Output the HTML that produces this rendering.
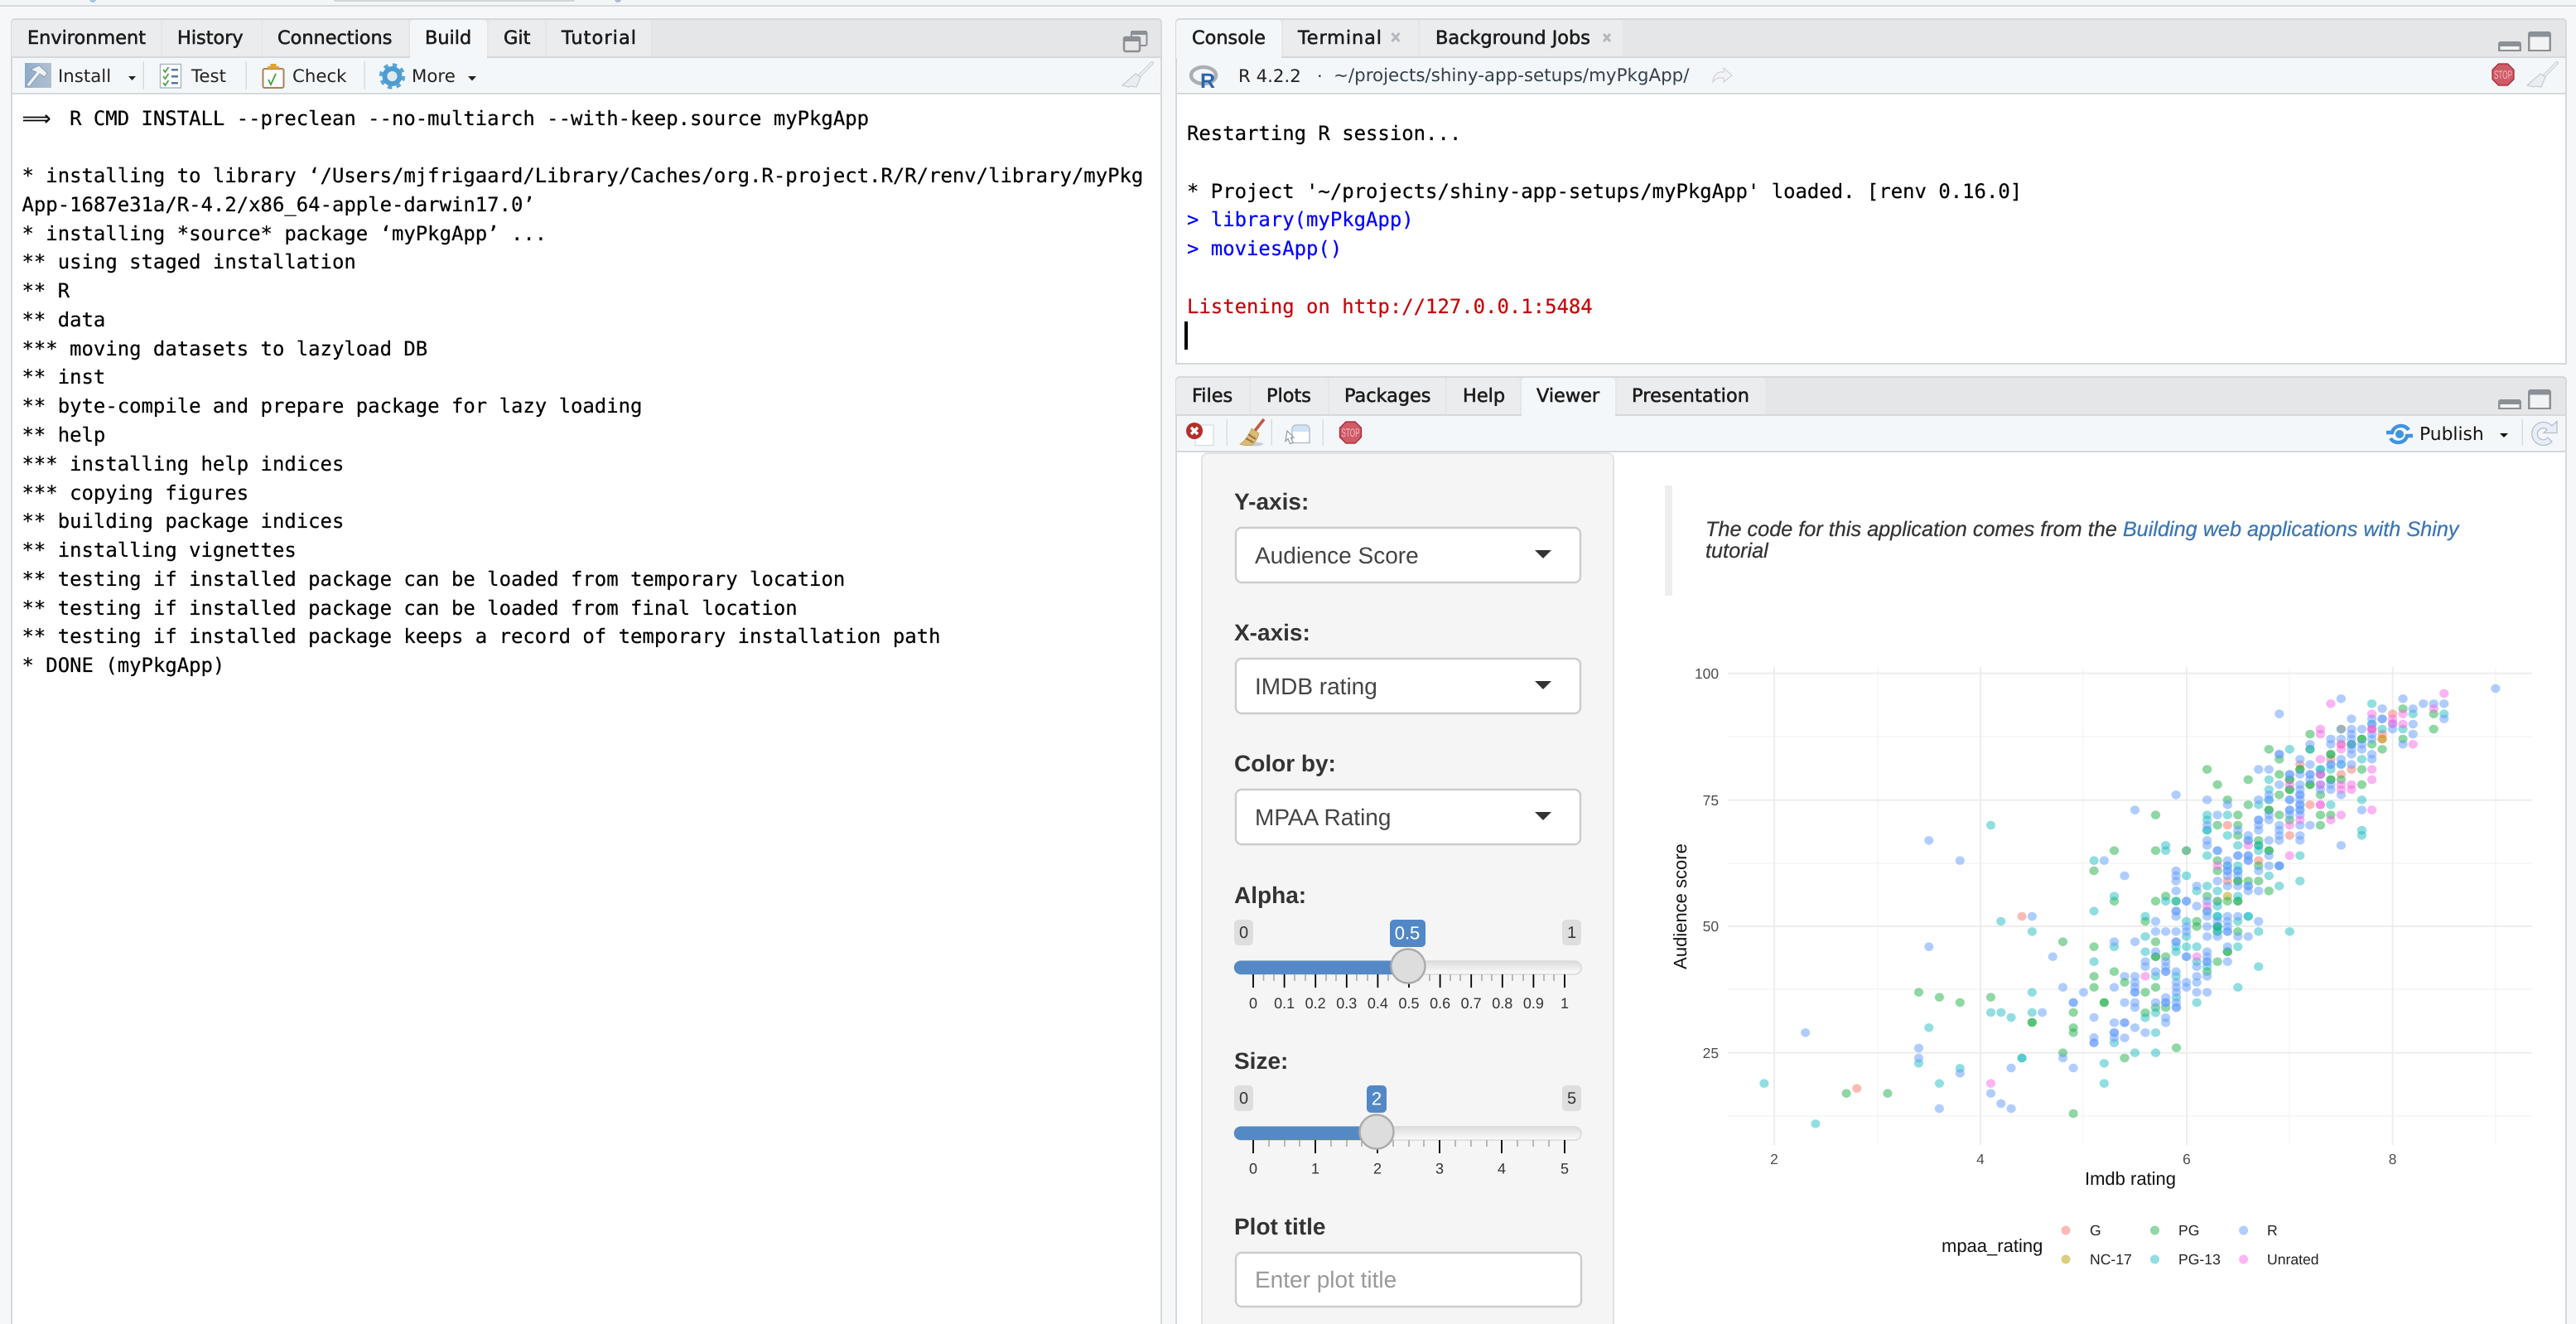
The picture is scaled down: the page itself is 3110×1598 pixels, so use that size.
<!DOCTYPE html>
<html lang="en">
<head>
<meta charset="utf-8">
<title>RStudio</title>
<style>
html,body{margin:0;padding:0;width:3110px;height:1598px;overflow:hidden;background:#f5f7f9}
svg{position:absolute;left:0;top:0;text-rendering:geometricPrecision}
pre{position:absolute;margin:0;font-family:"DejaVu Sans Mono","Liberation Mono",monospace;font-size:23.93px;line-height:34.77px;color:#000;text-rendering:geometricPrecision;white-space:pre;-webkit-text-stroke:.22px}
.u{font-family:"DejaVu Sans","Liberation Sans",sans-serif}
.tb{font-size:22.4px;fill:#1c1c1c;stroke:#1c1c1c;stroke-width:.6px}
.tl{font-size:21.3px;fill:#222}
.h{font-family:"Liberation Sans",Arial,sans-serif}
.lb{font-size:28px;font-weight:700;fill:#333}
.sl{font-size:28px;fill:#444}
.tk{font-size:18px;fill:#333;text-anchor:middle}
.bd{font-size:20px;fill:#333;text-anchor:middle}
.bb{font-size:22px;fill:#fff;text-anchor:middle}
.yt{font-size:17.4px;fill:#4d4d4d;text-anchor:end}
.xt{font-size:17.4px;fill:#4d4d4d;text-anchor:middle}
.at{font-size:22px;fill:#111}
.lg{font-size:17.6px;fill:#222}
.d circle{r:15.8px}
.G{fill:#F8766D;fill-opacity:.5}
.N{fill:#B79F00;fill-opacity:.5}
.P{fill:#1fb04a;fill-opacity:.5}
.T{fill:#0fb8bd;fill-opacity:.46}
.R{fill:#619CFF;fill-opacity:.5}
.U{fill:#F564E3;fill-opacity:.48}
</style>
</head>
<body>
<svg width="3110" height="1598" viewBox="0 0 3110 1598" xmlns="http://www.w3.org/2000/svg">
<defs>
<linearGradient id="hm" x1="0" y1="0" x2="1" y2="0"><stop offset="0" stop-color="#8ea9c8"/><stop offset="1" stop-color="#b4c4d6"/></linearGradient>
<linearGradient id="trk" x1="0" y1="0" x2="0" y2="1"><stop offset="0" stop-color="#dcdcdc"/><stop offset="1" stop-color="#fcfcfc"/></linearGradient>
<g id="broomL">
<path d="M3087 76l-15 15" stroke="#c8ced4" stroke-width="4" stroke-linecap="round"/>
<path d="M3087 76l-15 15" stroke="#f3f5f7" stroke-width="1.6" stroke-linecap="round"/>
<path d="M3067 89l6 4-5 12-7-1-2 1-8-2z" fill="#eaeef2" stroke="#c5ccd3" stroke-width="1.2"/>
</g>
<g id="mm">
<path d="M3016 62v-9a3 3 0 0 1 3-3h22a3 3 0 0 1 3 3v9z" fill="#8a9094"/><rect x="3018.5" y="56" width="23" height="4" fill="#f2f4f6"/>
<path d="M3052 62V41a3 3 0 0 1 3-3h22a3 3 0 0 1 3 3v21z" fill="#8a9094"/><rect x="3054.5" y="44.5" width="23" height="15.5" fill="#f1f3f5"/>
</g>
<g id="stop">
<polygon points="-5.6,-13 5.6,-13 13,-5.6 13,5.6 5.6,13 -5.6,13 -13,5.6 -13,-5.6" fill="#cf5b67" stroke="#a3232c" stroke-width="1.2"/>
<text class="h" x="-11" y="5" textLength="22" lengthAdjust="spacingAndGlyphs" font-size="14" fill="#f3b9bd">STOP</text>
</g>
</defs>

<!-- top bar -->
<rect x="0" y="0" width="3110" height="6" fill="#f3f6f7"/>
<rect x="0" y="6" width="3110" height="2" fill="#d6dadc"/>
<path d="M403 0h291v0a2 2 0 0 1-2 2H405a2 2 0 0 1-2-2z" fill="#d2d6da"/>
<circle cx="112" cy="-1" r="4" fill="#9cc5e8"/><circle cx="746" cy="-1" r="4" fill="#a9bcd3"/>

<!-- LEFT PANE -->
<path d="M13 1598V27a5 5 0 0 1 5-5H1398a5 5 0 0 1 5 5V1598z" fill="#d5d9dc"/>
<rect x="15" y="114" width="1386" height="1484" fill="#fff"/>
<path d="M15 68V28a4 4 0 0 1 4-4H1397a4 4 0 0 1 4 4V68z" fill="#e5e6e8"/>
<rect x="15" y="68" width="1386" height="2" fill="#d5d9dc"/>
<rect x="15" y="70" width="1386" height="42" fill="#f4f7f9"/>
<rect x="15" y="112" width="1386" height="2" fill="#d5d9dc"/>
<g fill="#ebecee">
<path d="M14 68V28a4 4 0 0 1 4-4H190a4 4 0 0 1 4 4V68z"/>
<path d="M196 68V28a4 4 0 0 1 4-4H311a4 4 0 0 1 4 4V68z"/>
<path d="M317 68V28a4 4 0 0 1 4-4H489a4 4 0 0 1 4 4V68z"/>
<path d="M590 68V28a4 4 0 0 1 4-4H654a4 4 0 0 1 4 4V68z"/>
<path d="M660 68V28a4 4 0 0 1 4-4H782a4 4 0 0 1 4 4V68z"/>
</g>
<path d="M495 70V28a4 4 0 0 1 4-4H584a4 4 0 0 1 4 4V70z" fill="#f4f7f9"/>
<g class="u tb">
<text x="33" y="53">Environment</text>
<text x="214" y="53">History</text>
<text x="335" y="53">Connections</text>
<text x="513" y="53">Build</text>
<text x="608" y="53">Git</text>
<text x="678" y="53" textLength="90">Tutorial</text>
</g>
<!-- left toolbar -->
<rect x="30" y="76" width="32" height="30" fill="url(#hm)"/>
<path d="M30 106l32-30v30z" fill="#a8b9cc" opacity=".5"/>
<path d="M37 84l10-5 10 9-3 5-6-4-13 16-3-3 12-15z" fill="#eef2f6" stroke="#7f95ad" stroke-width=".8"/>
<path d="M155 92h9l-4.500 5z" fill="#222"/>
<rect x="172.500" y="74" width="1.500" height="34" fill="#d9dde0"/>
<rect x="193.500" y="77.500" width="25" height="28.500" fill="#fff" stroke="#a9b4c0" stroke-width="1.400"/>
<g fill="none" stroke="#4ca34a" stroke-width="1.800"><path d="M197 84l2.500 3 4-6"/><path d="M197 92l2.500 3 4-6"/><path d="M197 100l2.500 3 4-6"/></g>
<g fill="#5577a8"><rect x="207" y="83" width="8" height="2.500"/><rect x="207" y="91" width="8" height="2.500"/><rect x="207" y="99" width="8" height="2.500"/></g>
<text class="u tl" x="231" y="99">Test</text>
<rect x="296.500" y="74" width="1.500" height="34" fill="#d9dde0"/>
<rect x="317.500" y="83" width="25" height="23" rx="2" fill="#fff" stroke="#a98258" stroke-width="2"/>
<path d="M323 83v-3h3.500v-3h7v3h3.500v3z" fill="#e0a52e"/>
<path d="M324 96l3 6 6-13" fill="none" stroke="#3aa33a" stroke-width="1.800"/>
<text class="u tl" x="353" y="99">Check</text>
<rect x="439.500" y="74" width="1.500" height="34" fill="#d9dde0"/>
<circle cx="473.500" cy="92" r="13" fill="none" stroke="#5aa7d8" stroke-width="5.500" stroke-dasharray="5.100 5.110"/>
<circle cx="473.500" cy="92" r="9" fill="none" stroke="#4f9cd0" stroke-width="6"/>
<circle cx="473.500" cy="92" r="5.500" fill="#dfe9f0"/>
<text class="u tl" x="497" y="99">More</text>
<path d="M565 92h10l-5 5.500z" fill="#222"/>
<text class="u tl" x="70" y="99">Install</text>
<use href="#broomL" x="-1696" y="0"/>
<rect x="1366" y="38" width="18.500" height="17" rx="2" fill="#e5e6e8" stroke="#8a9094" stroke-width="2"/>
<rect x="1365" y="37" width="20" height="5" rx="2" fill="#8a9094"/>
<rect x="1357" y="45" width="19" height="17" rx="2" fill="#e5e6e8" stroke="#8a9094" stroke-width="2.500"/>
<rect x="1356" y="44" width="21" height="6" rx="2" fill="#8a9094"/>

<!-- CONSOLE PANE -->
<path d="M1419 440V27a5 5 0 0 1 5-5H3094a5 5 0 0 1 5 5V440z" fill="#d5d9dc"/>
<rect x="1421" y="114" width="1676" height="324" fill="#fff"/>
<path d="M1421 68V28a4 4 0 0 1 4-4H3093a4 4 0 0 1 4 4V68z" fill="#e5e6e8"/>
<rect x="1421" y="68" width="1676" height="2" fill="#d5d9dc"/>
<rect x="1421" y="70" width="1676" height="42" fill="#f4f7f9"/>
<rect x="1421" y="112" width="1676" height="2" fill="#d5d9dc"/>
<g fill="#ebecee">
<path d="M1549 68V28a4 4 0 0 1 4-4H1708a4 4 0 0 1 4 4V68z"/>
<path d="M1714 68V28a4 4 0 0 1 4-4H1955a4 4 0 0 1 4 4V68z"/>
</g>
<path d="M1420 70V28a4 4 0 0 1 4-4H1543a4 4 0 0 1 4 4V70z" fill="#f4f7f9"/>
<g class="u tb">
<text x="1439" y="53">Console</text>
<text x="1567" y="53" textLength="101">Terminal</text>
<text x="1733" y="53">Background Jobs</text>
</g>
<path d="M1680.500 40l9 10M1689.500 40l-9 10M1936 41l8 9M1944 41l-8 9" stroke="#b4b8bc" stroke-width="3" fill="none"/>
<ellipse cx="1453" cy="91" rx="15" ry="10" fill="none" stroke="#a9afb5" stroke-width="4.500"/>
<text class="h" x="1449" y="106" font-size="25" font-weight="700" fill="#2c63ae">R</text>
<text class="u" x="1495" y="99" font-size="21.300" fill="#222">R 4.2.2</text>
<text class="u" x="1590" y="99" font-size="21" fill="#333">·</text>
<text class="u" x="1610" y="98" font-size="21.400" fill="#33404e">~/projects/shiny-app-setups/myPkgApp/</text>
<path d="M2068 99c0-9 6-13 13-12v-5l10 9-10 8v-5c-6-1-10 1-13 5z" fill="#f1f3f5" stroke="#cfd4d9" stroke-width="1.200"/>
<use href="#stop" transform="translate(3022 90)"/>
<use href="#broomL"/>
<use href="#mm"/>

<!-- VIEWER PANE -->
<path d="M1419 1598V459a5 5 0 0 1 5-5H3094a5 5 0 0 1 5 5V1598z" fill="#d5d9dc"/>
<rect x="1421" y="546" width="1676" height="1052" fill="#fff"/>
<path d="M1421 500V460a4 4 0 0 1 4-4H3093a4 4 0 0 1 4 4V500z" fill="#e5e6e8"/>
<rect x="1421" y="500" width="1676" height="2" fill="#d5d9dc"/>
<rect x="1421" y="502" width="1676" height="42" fill="#f4f7f9"/>
<rect x="1421" y="544" width="1676" height="2" fill="#d5d9dc"/>
<g fill="#ebecee">
<path d="M1420 500V460a4 4 0 0 1 4-4H1504a4 4 0 0 1 4 4V500z"/>
<path d="M1510 500V460a4 4 0 0 1 4-4H1599a4 4 0 0 1 4 4V500z"/>
<path d="M1605 500V460a4 4 0 0 1 4-4H1741a4 4 0 0 1 4 4V500z"/>
<path d="M1747 500V460a4 4 0 0 1 4-4H1831a4 4 0 0 1 4 4V500z"/>
<path d="M1952 500V460a4 4 0 0 1 4-4H2127a4 4 0 0 1 4 4V500z"/>
</g>
<path d="M1837 502V460a4 4 0 0 1 4-4H1946a4 4 0 0 1 4 4V502z" fill="#f4f7f9"/>
<g class="u tb">
<text x="1439" y="485">Files</text>
<text x="1529" y="485">Plots</text>
<text x="1623" y="485">Packages</text>
<text x="1766" y="485">Help</text>
<text x="1855" y="485">Viewer</text>
<text x="1970" y="485" textLength="142">Presentation</text>
</g>
<use href="#mm" y="432"/>
<!-- viewer toolbar icons -->
<rect x="1443" y="513" width="22" height="24.500" fill="#fff" stroke="#d5dae0" stroke-width="1.200"/>
<circle cx="1442" cy="520" r="10" fill="#b4302b"/>
<path d="M1438 516l8 8M1446 516l-8 8" stroke="#fff" stroke-width="3.400"/>
<rect x="1480.500" y="506" width="1.500" height="32" fill="#d9dde0"/>
<ellipse cx="1514" cy="536" rx="11" ry="2.500" fill="#c9ced2"/>
<path d="M1526 506l-11 14" stroke="#bf5a40" stroke-width="3.600"/>
<path d="M1511 517l9 6c-1 6-5 11-8 14-5 1-10 1-15-1 6-4 11-11 14-19z" fill="#d9bb74" stroke="#b99a55" stroke-width=".7"/>
<path d="M1507 524l9 6M1504 529l9 5" stroke="#9c6f3c" stroke-width="2"/>
<rect x="1534.500" y="506" width="1.500" height="32" fill="#d9dde0"/>
<path d="M1560 534.500V518a5 5 0 0 1 5-5h11a5 5 0 0 1 5 5v16.500z" fill="#fff" stroke="#aab6c2" stroke-width="1.300"/>
<path d="M1560.700 521v-3a5 5 0 0 1 5-4.300h10a5 5 0 0 1 4.700 4.300v3z" fill="#cfe3f8"/>
<path d="M1560 517l8 8h-3.500l2.500 6-3.500 1.500-2.500-6-3 3z" transform="translate(-6 3)" fill="#fff" stroke="#8e9aa6" stroke-width="1.200"/>
<rect x="1596.500" y="506" width="1.500" height="32" fill="#d9dde0"/>
<use href="#stop" transform="translate(1630.500 522)"/>
<!-- publish -->
<circle cx="2897" cy="524" r="5" fill="#3e94e0"/>
<path d="M2881 522h7c2-9 15-11 20-3M2913 526h-7c-2 9-15 11-20 3" fill="none" stroke="#3e94e0" stroke-width="4.400"/>
<text class="u" x="2921" y="531" font-size="21.800" fill="#111">Publish</text>
<path d="M3018 523h10l-5 5z" fill="#111"/>
<rect x="3044.500" y="506" width="1.500" height="32" fill="#d9dde0"/>
<path d="M3081 514a14 14 0 1 0 0 19l-5-5a7 7 0 1 1-1-9.500l-4 4h16v-14z" fill="#e8eef7" stroke="#b6bec8" stroke-width="1.300"/>

<!-- well -->
<path d="M1451 1600V554a7 7 0 0 1 7-7h483a7 7 0 0 1 7 7V1600z" fill="#f5f5f5" stroke="#e3e3e3" stroke-width="2"/>
<g class="h">
<text class="lb" x="1490" y="615">Y-axis:</text>
<text class="lb" x="1490" y="773">X-axis:</text>
<text class="lb" x="1490" y="931">Color by:</text>
<text class="lb" x="1490" y="1090">Alpha:</text>
<text class="lb" x="1490" y="1290">Size:</text>
<text class="lb" x="1490" y="1490">Plot title</text>
</g>
<g fill="#fff" stroke="#cccccc" stroke-width="2.400">
<rect x="1492" y="637" width="416" height="66" rx="7"/>
<rect x="1492" y="795" width="416" height="66" rx="7"/>
<rect x="1492" y="953" width="416" height="66" rx="7"/>
<rect x="1492" y="1512" width="417" height="65" rx="7"/>
</g>
<g class="h">
<text class="sl" x="1515" y="680">Audience Score</text>
<text class="sl" x="1515" y="838">IMDB rating</text>
<text class="sl" x="1515" y="996">MPAA Rating</text>
<text x="1515" y="1554" font-size="28" fill="#999">Enter plot title</text>
</g>
<g fill="#333"><path d="M1853 664h20l-10 10z"/><path d="M1853 822h20l-10 10z"/><path d="M1853 980h20l-10 10z"/></g>

<!-- alpha slider -->
<rect x="1490" y="1110" width="23" height="31" rx="5" fill="#dedede"/>
<rect x="1886" y="1110" width="23" height="31" rx="5" fill="#dedede"/>
<rect x="1678" y="1110" width="43" height="33" rx="5" fill="#5288c6"/>
<g class="h">
<text class="bd" x="1501.500" y="1132">0</text><text class="bd" x="1897.500" y="1132">1</text>
<text class="bb" x="1699" y="1133.500">0.5</text>
</g>
<rect x="1491" y="1160" width="418" height="16" rx="8" fill="url(#trk)" stroke="#d9d9d9" stroke-width="1.600"/>
<path d="M1700 1159.500H1498a8 8 0 0 0 0 16.500H1700z" fill="#5589c6"/>
<path d="M1525.500 1176v8M1538 1176v8M1563 1176v8M1576 1176v8M1601 1176v8M1613 1176v8M1638 1176v8M1651 1176v8M1676 1176v8M1688 1176v8M1713 1176v8M1726 1176v8M1751 1176v8M1763 1176v8M1789 1176v8M1801 1176v8M1826 1176v8M1839 1176v8M1864 1176v8M1876 1176v8" stroke="#aaa" stroke-width="1.600"/>
<path d="M1513 1176v16M1550.600 1176v16M1588.200 1176v16M1625.800 1176v16M1663.400 1176v16M1701 1176v16M1738.600 1176v16M1776.200 1176v16M1813.800 1176v16M1851.400 1176v16M1889 1176v16" stroke="#000" stroke-width="1.800"/>
<circle cx="1700" cy="1166" r="20.500" fill="#dddddd" stroke="#ababab" stroke-width="2.400"/>
<g class="h">
<text class="tk" x="1513" y="1217">0</text><text class="tk" x="1550.600" y="1217">0.1</text><text class="tk" x="1588.200" y="1217">0.2</text><text class="tk" x="1625.800" y="1217">0.3</text><text class="tk" x="1663.400" y="1217">0.4</text><text class="tk" x="1701" y="1217">0.5</text><text class="tk" x="1738.600" y="1217">0.6</text><text class="tk" x="1776.200" y="1217">0.7</text><text class="tk" x="1813.800" y="1217">0.8</text><text class="tk" x="1851.400" y="1217">0.9</text><text class="tk" x="1889" y="1217">1</text>
</g>
<!-- size slider -->
<rect x="1490" y="1310" width="23" height="31" rx="5" fill="#dedede"/>
<rect x="1886" y="1310" width="23" height="31" rx="5" fill="#dedede"/>
<rect x="1650" y="1310" width="24" height="33" rx="5" fill="#5288c6"/>
<g class="h">
<text class="bd" x="1501.500" y="1332">0</text><text class="bd" x="1897.500" y="1332">5</text>
<text class="bb" x="1662" y="1333.500">2</text>
</g>
<rect x="1491" y="1360" width="418" height="16" rx="8" fill="url(#trk)" stroke="#d9d9d9" stroke-width="1.600"/>
<path d="M1662 1359.500H1498a8 8 0 0 0 0 16.500H1662z" fill="#5589c6"/>
<path d="M1532 1376v8M1551 1376v8M1569 1376v8M1607 1376v8M1626 1376v8M1644 1376v8M1682 1376v8M1701 1376v8M1719 1376v8M1757 1376v8M1776 1376v8M1795 1376v8M1832 1376v8M1851 1376v8M1870 1376v8" stroke="#aaa" stroke-width="1.600"/>
<path d="M1513 1376v16M1588 1376v16M1663 1376v16M1738 1376v16M1813 1376v16M1889 1376v16" stroke="#000" stroke-width="1.800"/>
<circle cx="1662" cy="1366" r="20.500" fill="#dddddd" stroke="#ababab" stroke-width="2.400"/>
<g class="h">
<text class="tk" x="1513" y="1416.500">0</text><text class="tk" x="1588" y="1416.500">1</text><text class="tk" x="1663" y="1416.500">2</text><text class="tk" x="1738" y="1416.500">3</text><text class="tk" x="1813" y="1416.500">4</text><text class="tk" x="1889" y="1416.500">5</text>
</g>

<!-- blockquote -->
<rect x="2010" y="586" width="9" height="133" fill="#eeeeee"/>
<g class="h" font-size="25.250" font-style="italic" fill="#333" style="stroke:currentColor;stroke-width:0">
<text x="2059" y="647" stroke="#333" stroke-width=".25">The code for this application comes from the <tspan fill="#3a76b4" stroke="#3a76b4">Building web applications with Shiny</tspan></text>
<text x="2059" y="673" stroke="#333" stroke-width=".25">tutorial</text>
</g>

<!-- plot grid -->
<g stroke="#f2f2f2" stroke-width="1.200">
<path d="M2086 889H3057M2086 1042H3057M2086 1194H3057M2086 1347H3057"/>
<path d="M2267 805V1382M2515 805V1382M2764 805V1382M3013 805V1382"/>
</g>
<g stroke="#ededed" stroke-width="2">
<path d="M2086 812.700H3057M2086 965.700H3057M2086 1118H3057M2086 1270.700H3057"/>
<path d="M2142 805V1382M2391 805V1382M2640 805V1382M2888.600 805V1382"/>
</g>
<g class="h">
<text class="yt" x="2075" y="819">100</text><text class="yt" x="2075" y="972">75</text><text class="yt" x="2075" y="1124">50</text><text class="yt" x="2075" y="1277">25</text>
<text class="xt" x="2142" y="1405">2</text><text class="xt" x="2391" y="1405">4</text><text class="xt" x="2640" y="1405">6</text><text class="xt" x="2888.600" y="1405">8</text>
<text class="at" x="2572" y="1430" text-anchor="middle">Imdb rating</text>
<text class="at" transform="translate(2036 1094) rotate(-90)" text-anchor="middle">Audience score</text>
<text class="at" x="2344" y="1511">mpaa_rating</text>
<text class="lg" x="2523" y="1491">G</text><text class="lg" x="2523" y="1526">NC-17</text>
<text class="lg" x="2630" y="1491">PG</text><text class="lg" x="2630" y="1526">PG-13</text>
<text class="lg" x="2737" y="1491">R</text><text class="lg" x="2737" y="1526">Unrated</text>
</g>
<circle class="G" cx="2494" cy="1485" r="5.500"/><circle class="N" cx="2494" cy="1520" r="5.500"/>
<circle class="P" cx="2601.500" cy="1485" r="5.500"/><circle class="T" cx="2601.500" cy="1520" r="5.500"/>
<circle class="R" cx="2708.600" cy="1485" r="5.500"/><circle class="U" cx="2708.600" cy="1520" r="5.500"/>

<!-- points: upper right -->
<g class="d" transform="translate(2550 760) scale(.35714 .33333)">
<g class="G"><circle cx="948" cy="305"/><circle cx="913" cy="396"/><circle cx="809" cy="506"/><circle cx="774" cy="524"/><circle cx="635" cy="488"/><circle cx="739" cy="469"/><circle cx="669" cy="634"/><circle cx="704" cy="524"/><circle cx="390" cy="708"/><circle cx="600" cy="745"/><circle cx="495" cy="836"/><circle cx="390" cy="910"/><circle cx="774" cy="415"/><circle cx="878" cy="360"/><circle cx="913" cy="378"/></g>
<g class="N"><circle cx="390" cy="965"/><circle cx="913" cy="396"/><circle cx="774" cy="360"/><circle cx="251" cy="800"/><circle cx="356" cy="983"/></g>
<g class="P"><circle cx="669" cy="378"/><circle cx="530" cy="433"/><circle cx="669" cy="433"/><circle cx="565" cy="469"/><circle cx="321" cy="506"/><circle cx="460" cy="543"/><circle cx="565" cy="524"/><circle cx="635" cy="506"/><circle cx="635" cy="506"/><circle cx="739" cy="451"/><circle cx="739" cy="451"/><circle cx="844" cy="396"/><circle cx="844" cy="396"/><circle cx="809" cy="415"/><circle cx="809" cy="415"/><circle cx="878" cy="415"/><circle cx="913" cy="433"/><circle cx="983" cy="286"/><circle cx="983" cy="396"/><circle cx="1087" cy="305"/><circle cx="1087" cy="360"/><circle cx="774" cy="543"/><circle cx="739" cy="543"/><circle cx="739" cy="543"/><circle cx="844" cy="506"/><circle cx="844" cy="561"/><circle cx="600" cy="543"/><circle cx="600" cy="543"/><circle cx="600" cy="579"/><circle cx="600" cy="579"/><circle cx="669" cy="561"/><circle cx="669" cy="561"/><circle cx="565" cy="598"/><circle cx="704" cy="598"/><circle cx="356" cy="561"/><circle cx="390" cy="616"/><circle cx="460" cy="634"/><circle cx="147" cy="671"/><circle cx="530" cy="653"/><circle cx="530" cy="653"/><circle cx="565" cy="671"/><circle cx="704" cy="671"/><circle cx="739" cy="671"/><circle cx="704" cy="708"/><circle cx="425" cy="671"/><circle cx="425" cy="708"/><circle cx="356" cy="708"/><circle cx="425" cy="745"/><circle cx="495" cy="763"/><circle cx="495" cy="781"/><circle cx="600" cy="689"/><circle cx="147" cy="800"/><circle cx="7" cy="800"/><circle cx="530" cy="800"/><circle cx="530" cy="800"/><circle cx="356" cy="836"/><circle cx="356" cy="873"/><circle cx="495" cy="855"/><circle cx="460" cy="910"/><circle cx="495" cy="910"/><circle cx="425" cy="910"/><circle cx="425" cy="910"/><circle cx="530" cy="946"/><circle cx="147" cy="983"/><circle cx="7" cy="983"/><circle cx="181" cy="965"/><circle cx="321" cy="965"/><circle cx="390" cy="983"/><circle cx="425" cy="983"/><circle cx="425" cy="983"/><circle cx="216" cy="983"/><circle cx="112" cy="1056"/><circle cx="286" cy="1056"/><circle cx="286" cy="1075"/><circle cx="356" cy="1075"/><circle cx="356" cy="1075"/><circle cx="356" cy="1093"/><circle cx="425" cy="1093"/><circle cx="147" cy="1130"/><circle cx="181" cy="1184"/><circle cx="147" cy="1184"/><circle cx="147" cy="1184"/><circle cx="390" cy="1166"/><circle cx="390" cy="1166"/><circle cx="356" cy="1202"/><circle cx="321" cy="1238"/><circle cx="7" cy="1238"/></g>
<g class="T"><circle cx="878" cy="268"/><circle cx="1017" cy="305"/><circle cx="1122" cy="305"/><circle cx="983" cy="360"/><circle cx="878" cy="342"/><circle cx="913" cy="360"/><circle cx="600" cy="433"/><circle cx="669" cy="433"/><circle cx="844" cy="469"/><circle cx="739" cy="506"/><circle cx="704" cy="506"/><circle cx="704" cy="506"/><circle cx="774" cy="488"/><circle cx="530" cy="543"/><circle cx="530" cy="579"/><circle cx="530" cy="616"/><circle cx="495" cy="634"/><circle cx="739" cy="634"/><circle cx="844" cy="616"/><circle cx="390" cy="671"/><circle cx="321" cy="671"/><circle cx="321" cy="689"/><circle cx="321" cy="726"/><circle cx="321" cy="726"/><circle cx="390" cy="745"/><circle cx="425" cy="781"/><circle cx="495" cy="781"/><circle cx="495" cy="800"/><circle cx="460" cy="763"/><circle cx="321" cy="818"/><circle cx="635" cy="818"/><circle cx="181" cy="781"/><circle cx="181" cy="800"/><circle cx="251" cy="800"/><circle cx="530" cy="891"/><circle cx="635" cy="910"/><circle cx="565" cy="928"/><circle cx="251" cy="891"/><circle cx="321" cy="928"/><circle cx="356" cy="946"/><circle cx="425" cy="855"/><circle cx="425" cy="873"/><circle cx="286" cy="946"/><circle cx="390" cy="855"/><circle cx="425" cy="965"/><circle cx="321" cy="1019"/><circle cx="356" cy="983"/><circle cx="356" cy="1001"/><circle cx="181" cy="983"/><circle cx="216" cy="983"/><circle cx="7" cy="965"/><circle cx="112" cy="1038"/><circle cx="251" cy="1056"/><circle cx="356" cy="1038"/><circle cx="356" cy="1038"/><circle cx="460" cy="1038"/><circle cx="460" cy="1038"/><circle cx="425" cy="1056"/><circle cx="356" cy="1093"/><circle cx="495" cy="1093"/><circle cx="600" cy="1093"/><circle cx="251" cy="1111"/><circle cx="112" cy="1111"/><circle cx="425" cy="1148"/><circle cx="251" cy="1148"/><circle cx="286" cy="1148"/><circle cx="216" cy="1148"/><circle cx="216" cy="1166"/><circle cx="112" cy="1166"/><circle cx="356" cy="1075"/><circle cx="495" cy="1220"/><circle cx="321" cy="1220"/><circle cx="286" cy="1202"/><circle cx="216" cy="1255"/><circle cx="147" cy="1255"/><circle cx="844" cy="726"/><circle cx="844" cy="745"/><circle cx="7" cy="1148"/></g>
<g class="R"><circle cx="1296" cy="213"/><circle cx="774" cy="250"/><circle cx="565" cy="305"/><circle cx="983" cy="250"/><circle cx="1052" cy="268"/><circle cx="1087" cy="268"/><circle cx="1122" cy="268"/><circle cx="1017" cy="286"/><circle cx="1122" cy="323"/><circle cx="913" cy="286"/><circle cx="809" cy="323"/><circle cx="878" cy="323"/><circle cx="913" cy="323"/><circle cx="913" cy="323"/><circle cx="948" cy="360"/><circle cx="948" cy="340"/><circle cx="878" cy="342"/><circle cx="809" cy="360"/><circle cx="844" cy="360"/><circle cx="774" cy="360"/><circle cx="1017" cy="342"/><circle cx="1017" cy="378"/><circle cx="983" cy="415"/><circle cx="739" cy="396"/><circle cx="739" cy="415"/><circle cx="774" cy="396"/><circle cx="809" cy="378"/><circle cx="809" cy="396"/><circle cx="809" cy="415"/><circle cx="809" cy="433"/><circle cx="809" cy="451"/><circle cx="844" cy="415"/><circle cx="844" cy="433"/><circle cx="878" cy="378"/><circle cx="878" cy="396"/><circle cx="878" cy="451"/><circle cx="878" cy="469"/><circle cx="669" cy="415"/><circle cx="565" cy="451"/><circle cx="565" cy="451"/><circle cx="635" cy="469"/><circle cx="774" cy="469"/><circle cx="774" cy="488"/><circle cx="739" cy="488"/><circle cx="739" cy="488"/><circle cx="669" cy="488"/><circle cx="809" cy="488"/><circle cx="495" cy="506"/><circle cx="530" cy="506"/><circle cx="600" cy="524"/><circle cx="600" cy="524"/><circle cx="635" cy="524"/><circle cx="669" cy="524"/><circle cx="669" cy="524"/><circle cx="669" cy="543"/><circle cx="704" cy="524"/><circle cx="565" cy="561"/><circle cx="635" cy="561"/><circle cx="635" cy="579"/><circle cx="635" cy="598"/><circle cx="635" cy="598"/><circle cx="635" cy="616"/><circle cx="704" cy="561"/><circle cx="704" cy="579"/><circle cx="739" cy="561"/><circle cx="739" cy="579"/><circle cx="774" cy="598"/><circle cx="600" cy="616"/><circle cx="600" cy="616"/><circle cx="495" cy="616"/><circle cx="530" cy="598"/><circle cx="530" cy="616"/><circle cx="216" cy="598"/><circle cx="321" cy="616"/><circle cx="390" cy="634"/><circle cx="77" cy="653"/><circle cx="844" cy="653"/><circle cx="635" cy="634"/><circle cx="635" cy="634"/><circle cx="635" cy="653"/><circle cx="635" cy="653"/><circle cx="600" cy="653"/><circle cx="600" cy="653"/><circle cx="635" cy="671"/><circle cx="600" cy="671"/><circle cx="356" cy="671"/><circle cx="321" cy="708"/><circle cx="495" cy="689"/><circle cx="495" cy="689"/><circle cx="495" cy="708"/><circle cx="495" cy="726"/><circle cx="530" cy="671"/><circle cx="530" cy="689"/><circle cx="565" cy="708"/><circle cx="635" cy="708"/><circle cx="669" cy="708"/><circle cx="565" cy="726"/><circle cx="565" cy="745"/><circle cx="565" cy="763"/><circle cx="635" cy="745"/><circle cx="635" cy="763"/><circle cx="460" cy="745"/><circle cx="460" cy="763"/><circle cx="425" cy="726"/><circle cx="321" cy="763"/><circle cx="321" cy="781"/><circle cx="530" cy="763"/><circle cx="774" cy="781"/><circle cx="356" cy="800"/><circle cx="356" cy="800"/><circle cx="530" cy="818"/><circle cx="460" cy="818"/><circle cx="460" cy="818"/><circle cx="425" cy="818"/><circle cx="425" cy="818"/><circle cx="460" cy="836"/><circle cx="460" cy="836"/><circle cx="530" cy="855"/><circle cx="565" cy="855"/><circle cx="565" cy="855"/><circle cx="565" cy="855"/><circle cx="495" cy="873"/><circle cx="390" cy="836"/><circle cx="390" cy="855"/><circle cx="390" cy="873"/><circle cx="390" cy="873"/><circle cx="390" cy="891"/><circle cx="425" cy="873"/><circle cx="425" cy="891"/><circle cx="216" cy="873"/><circle cx="216" cy="891"/><circle cx="216" cy="910"/><circle cx="42" cy="891"/><circle cx="356" cy="910"/><circle cx="390" cy="928"/><circle cx="425" cy="928"/><circle cx="460" cy="928"/><circle cx="460" cy="928"/><circle cx="460" cy="946"/><circle cx="495" cy="946"/><circle cx="286" cy="928"/><circle cx="216" cy="946"/><circle cx="251" cy="983"/><circle cx="251" cy="983"/><circle cx="286" cy="1001"/><circle cx="321" cy="983"/><circle cx="321" cy="1019"/><circle cx="321" cy="1038"/><circle cx="216" cy="1019"/><circle cx="216" cy="1019"/><circle cx="216" cy="1038"/><circle cx="147" cy="1056"/><circle cx="356" cy="1056"/><circle cx="390" cy="1038"/><circle cx="425" cy="1038"/><circle cx="390" cy="1056"/><circle cx="390" cy="1075"/><circle cx="390" cy="1093"/><circle cx="390" cy="1093"/><circle cx="321" cy="1075"/><circle cx="495" cy="1056"/><circle cx="147" cy="1093"/><circle cx="181" cy="1093"/><circle cx="216" cy="1093"/><circle cx="251" cy="1075"/><circle cx="251" cy="1093"/><circle cx="321" cy="1111"/><circle cx="356" cy="1111"/><circle cx="425" cy="1111"/><circle cx="460" cy="1111"/><circle cx="77" cy="1130"/><circle cx="7" cy="1130"/><circle cx="216" cy="1130"/><circle cx="216" cy="1130"/><circle cx="390" cy="1148"/><circle cx="251" cy="1184"/><circle cx="251" cy="1184"/><circle cx="321" cy="1166"/><circle cx="147" cy="1166"/><circle cx="112" cy="1202"/><circle cx="112" cy="1220"/><circle cx="181" cy="1202"/><circle cx="181" cy="1220"/><circle cx="181" cy="1238"/><circle cx="181" cy="1238"/><circle cx="286" cy="1220"/><circle cx="321" cy="1184"/><circle cx="321" cy="1202"/><circle cx="321" cy="1202"/><circle cx="390" cy="1202"/><circle cx="147" cy="1238"/><circle cx="216" cy="1238"/><circle cx="286" cy="1255"/><circle cx="321" cy="1255"/><circle cx="42" cy="1255"/><circle cx="77" cy="1255"/></g>
<g class="U"><circle cx="1122" cy="231"/><circle cx="739" cy="268"/><circle cx="1087" cy="286"/><circle cx="878" cy="305"/><circle cx="983" cy="305"/><circle cx="948" cy="323"/><circle cx="948" cy="340"/><circle cx="983" cy="342"/><circle cx="704" cy="360"/><circle cx="704" cy="378"/><circle cx="878" cy="360"/><circle cx="878" cy="360"/><circle cx="774" cy="415"/><circle cx="774" cy="433"/><circle cx="1017" cy="415"/><circle cx="704" cy="469"/><circle cx="878" cy="506"/><circle cx="878" cy="543"/><circle cx="809" cy="561"/><circle cx="809" cy="579"/><circle cx="774" cy="561"/><circle cx="774" cy="579"/><circle cx="704" cy="634"/><circle cx="704" cy="634"/><circle cx="878" cy="653"/><circle cx="739" cy="689"/><circle cx="774" cy="671"/><circle cx="635" cy="689"/><circle cx="600" cy="708"/><circle cx="600" cy="818"/><circle cx="460" cy="781"/><circle cx="356" cy="855"/><circle cx="704" cy="524"/><circle cx="704" cy="561"/><circle cx="600" cy="561"/><circle cx="321" cy="1001"/><circle cx="286" cy="1184"/><circle cx="112" cy="1255"/></g>
</g>
<!-- points: lower right -->
<g class="d" transform="translate(2550 1170) scale(.35714 .33333)">
<g class="P"><circle cx="42" cy="47"/><circle cx="112" cy="83"/><circle cx="147" cy="65"/><circle cx="147" cy="138"/><circle cx="181" cy="138"/><circle cx="112" cy="157"/><circle cx="217" cy="284"/><circle cx="42" cy="321"/></g>
<g class="T"><circle cx="425" cy="65"/><circle cx="286" cy="120"/><circle cx="217" cy="102"/><circle cx="112" cy="175"/><circle cx="147" cy="157"/><circle cx="147" cy="229"/><circle cx="7" cy="266"/><circle cx="77" cy="302"/><circle cx="147" cy="302"/></g>
<g class="R"><circle cx="77" cy="47"/><circle cx="77" cy="65"/><circle cx="77" cy="83"/><circle cx="77" cy="83"/><circle cx="7" cy="65"/><circle cx="217" cy="47"/><circle cx="217" cy="65"/><circle cx="217" cy="83"/><circle cx="251" cy="47"/><circle cx="251" cy="65"/><circle cx="286" cy="47"/><circle cx="286" cy="83"/><circle cx="321" cy="83"/><circle cx="42" cy="120"/><circle cx="77" cy="120"/><circle cx="77" cy="138"/><circle cx="147" cy="120"/><circle cx="181" cy="102"/><circle cx="181" cy="120"/><circle cx="181" cy="120"/><circle cx="181" cy="175"/><circle cx="181" cy="193"/><circle cx="217" cy="120"/><circle cx="217" cy="138"/><circle cx="217" cy="138"/><circle cx="7" cy="193"/><circle cx="42" cy="193"/><circle cx="42" cy="193"/><circle cx="77" cy="211"/><circle cx="112" cy="229"/><circle cx="7" cy="229"/><circle cx="7" cy="229"/><circle cx="7" cy="248"/><circle cx="42" cy="248"/></g>
</g>
<!-- points: upper left -->
<g class="d" transform="translate(2000 760) scale(.35088 .33333)">
<g class="G"><circle cx="1257" cy="1038"/></g>
<g class="P"><circle cx="1505" cy="873"/><circle cx="1398" cy="1130"/><circle cx="1505" cy="1148"/><circle cx="1505" cy="1255"/></g>
<g class="T"><circle cx="1150" cy="708"/><circle cx="1505" cy="836"/><circle cx="1505" cy="1019"/><circle cx="1185" cy="1056"/><circle cx="1292" cy="1093"/><circle cx="1505" cy="1202"/></g>
<g class="R"><circle cx="937" cy="763"/><circle cx="1044" cy="836"/><circle cx="1540" cy="836"/><circle cx="1292" cy="1038"/><circle cx="937" cy="1148"/><circle cx="1363" cy="1184"/></g>
</g>
<!-- points: lower left -->
<g class="d" transform="translate(2000 1170) scale(.35088 .33333)">
<g class="G"><circle cx="689" cy="431"/></g>
<g class="P"><circle cx="902" cy="83"/><circle cx="973" cy="101"/><circle cx="1044" cy="120"/><circle cx="1150" cy="101"/><circle cx="1505" cy="65"/><circle cx="1434" cy="156"/><circle cx="1434" cy="211"/><circle cx="1434" cy="229"/><circle cx="1540" cy="120"/><circle cx="1540" cy="120"/><circle cx="1292" cy="192"/><circle cx="1292" cy="192"/><circle cx="1398" cy="302"/><circle cx="795" cy="449"/><circle cx="653" cy="449"/><circle cx="1434" cy="522"/></g>
<g class="T"><circle cx="1292" cy="83"/><circle cx="1150" cy="156"/><circle cx="1185" cy="156"/><circle cx="1220" cy="174"/><circle cx="1292" cy="156"/><circle cx="937" cy="211"/><circle cx="902" cy="340"/><circle cx="1044" cy="358"/><circle cx="1257" cy="321"/><circle cx="1257" cy="321"/><circle cx="973" cy="413"/><circle cx="1540" cy="340"/><circle cx="1540" cy="413"/><circle cx="370" cy="413"/><circle cx="547" cy="559"/></g>
<g class="R"><circle cx="1398" cy="65"/><circle cx="1469" cy="83"/><circle cx="1434" cy="120"/><circle cx="1434" cy="120"/><circle cx="1327" cy="156"/><circle cx="1505" cy="174"/><circle cx="1505" cy="247"/><circle cx="1505" cy="266"/><circle cx="1505" cy="266"/><circle cx="512" cy="229"/><circle cx="902" cy="285"/><circle cx="902" cy="321"/><circle cx="1044" cy="376"/><circle cx="1220" cy="357"/><circle cx="1398" cy="321"/><circle cx="1434" cy="357"/><circle cx="1150" cy="449"/><circle cx="1185" cy="486"/><circle cx="1220" cy="504"/><circle cx="973" cy="504"/></g>
<g class="U"><circle cx="1150" cy="413"/></g>
</g>
</svg>

<pre style="left:26.500px;top:125.600px"><span style="display:inline-block;width:43.200px;font-family:'DejaVu Sans',sans-serif;transform:scaleX(1.02)">⟹</span> R CMD INSTALL --preclean --no-multiarch --with-keep.source myPkgApp

* installing to library ‘/Users/mjfrigaard/Library/Caches/org.R-project.R/R/renv/library/myPkg
App-1687e31a/R-4.2/x86_64-apple-darwin17.0’
* installing *source* package ‘myPkgApp’ ...
** using staged installation
** R
** data
*** moving datasets to lazyload DB
** inst
** byte-compile and prepare package for lazy loading
** help
*** installing help indices
*** copying figures
** building package indices
** installing vignettes
** testing if installed package can be loaded from temporary location
** testing if installed package can be loaded from final location
** testing if installed package keeps a record of temporary installation path
* DONE (myPkgApp)</pre>

<pre style="left:1433px;top:144px">Restarting R session...

* Project '~/projects/shiny-app-setups/myPkgApp' loaded. [renv 0.16.0]
<span style="color:#0000ff">&gt; library(myPkgApp)
&gt; moviesApp()</span>

<span style="color:#c5060b">Listening on http://127.0.0.1:5484</span></pre>
<div style="position:absolute;left:1430px;top:388px;width:3.500px;height:34px;background:#000"></div>
</body>
</html>
